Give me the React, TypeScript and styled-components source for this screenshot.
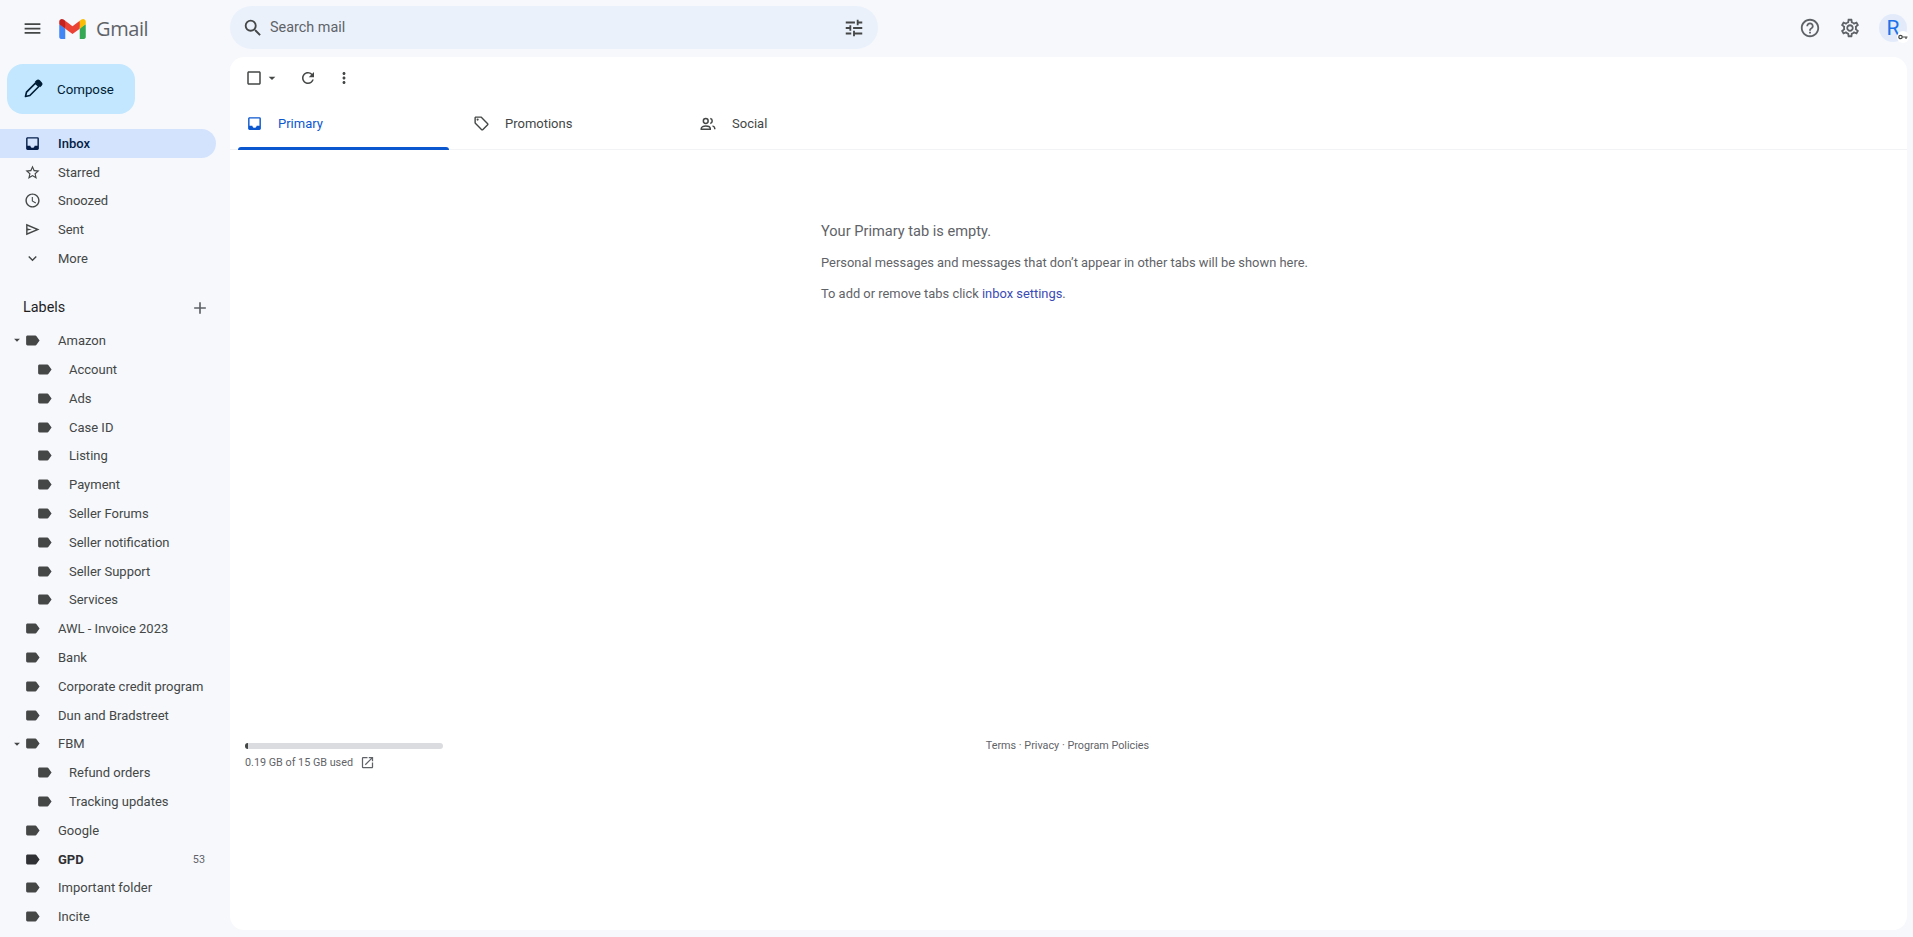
import React from "react";
import styled, { createGlobalStyle } from "styled-components";
import {
  MdMenu,
  MdSearch,
  MdTune,
  MdHelpOutline,
  MdOutlineSettings,
  MdInbox,
  MdStarBorder,
  MdAccessTime,
  MdExpandMore,
  MdAdd,
  MdLabel,
  MdArrowDropDown,
  MdCheckBoxOutlineBlank,
  MdRefresh,
  MdMoreVert,
  MdOutlineLocalOffer,
  MdOutlineOpenInNew,
} from "react-icons/md";

const GlobalStyle = createGlobalStyle`
  html, body {
    margin: 0;
    height: 100%;
    overflow: hidden;
    background: #f6f8fc;
  }
  body {
    font-family: Roboto, "Liberation Sans", sans-serif;
    color: #444746;
  }
`;

const Page = styled.div`
  height: 937px;
  display: grid;
  grid-template-columns: 230px 1fr;
  grid-template-rows: 57px 1fr;
  overflow: hidden;
`;

const Brand = styled.div`
  display: flex;
  align-items: center;
  padding-left: 22px;
  color: #444746;
`;

const LogoMark = styled.svg`
  width: 27px;
  height: 20px;
  margin-left: 16px;
`;

const Wordmark = styled.span`
  margin-left: 10px;
  font-family: "Open Sans", Roboto, sans-serif;
  font-size: 20px;
  letter-spacing: -0.4px;
  color: #5f6368;
`;

const TopBar = styled.header`
  display: flex;
  align-items: flex-start;
  justify-content: space-between;
  padding: 6px 6px 0 0;
`;

const SearchBox = styled.div`
  width: 648px;
  height: 43px;
  border-radius: 22px;
  background: #eaf1fb;
  display: flex;
  align-items: center;
  padding: 0 13px 0 12px;
  box-sizing: border-box;
  color: #444746;
`;

const SearchText = styled.span`
  flex: 1;
  margin-left: 6px;
  font-size: 14.4px;
  color: #5f6368;
`;

const TopActions = styled.div`
  display: flex;
  align-items: center;
  height: 43px;
  color: #5f6368;
  gap: 18px;
`;

const Avatar = styled.div`
  position: relative;
  width: 28px;
  height: 28px;
  border-radius: 50%;
  background: #e3ebfa;
  color: #1a73e8;
  font-size: 21px;
  display: flex;
  align-items: center;
  justify-content: center;
`;

const KeyBadge = styled.span`
  position: absolute;
  right: -2px;
  bottom: -1px;
  width: 12px;
  height: 12px;
  border-radius: 50%;
  background: #fff;
  color: #444746;
  display: flex;
  align-items: center;
  justify-content: center;
`;

const Sidebar = styled.aside`
  overflow: hidden;
  height: 880px;
`;

const ComposeButton = styled.div`
  width: 128px;
  height: 50px;
  margin: 7px 0 15px 7px;
  border-radius: 16px;
  background: #c2e7ff;
  color: #001d35;
  font-size: 13.3px;
  font-weight: 400;
  display: flex;
  align-items: center;
  gap: 14px;
  padding-left: 16px;
  box-sizing: border-box;
`;

const NavList = styled.nav`
  width: 216px;
`;

const NavRow = styled.div<{ $active?: boolean; $depth?: number; $bold?: boolean }>`
  position: relative;
  height: 28.8px;
  display: flex;
  align-items: center;
  padding-left: ${(p) => 23 + (p.$depth || 0) * 12}px;
  padding-right: 11px;
  border-radius: 0 15px 15px 0;
  font-size: 13px;
  font-weight: ${(p) => (p.$bold ? 700 : p.$active ? 500 : 400)};
  color: ${(p) => (p.$active ? "#041e49" : p.$bold ? "#303134" : "#444746")};
  background: ${(p) => (p.$active ? "#d3e3fd" : "transparent")};
`;

const NavIcon = styled.span<{ $depth?: number }>`
  width: 18px;
  height: 18px;
  flex: none;
  margin-right: ${(p) => (p.$depth ? 16 : 17)}px;
  display: flex;
  align-items: center;
  justify-content: center;
`;

const Caret = styled.span`
  position: absolute;
  left: 10px;
  top: 7px;
  color: #444746;
  display: flex;
`;

const Count = styled.span`
  margin-left: auto;
  font-size: 10.8px;
  font-weight: 400;
  color: #5f6368;
`;

const LabelsHead = styled.div`
  width: 216px;
  height: 28px;
  margin-top: 21px;
  margin-bottom: 4.4px;
  padding: 0 6px 0 23px;
  box-sizing: border-box;
  display: flex;
  align-items: center;
  justify-content: space-between;
  font-size: 14.4px;
  color: #1f1f1f;
`;

const AddLabel = styled.span`
  display: flex;
  color: #5f6368;
`;

const Panel = styled.main`
  margin: 0 6px 7px 0;
  height: 873px;
  background: #fff;
  border-radius: 14px;
  display: flex;
  flex-direction: column;
`;

const Toolbar = styled.div`
  height: 42px;
  display: flex;
  align-items: center;
  padding-left: 15px;
  color: #444746;
`;

const ToolButton = styled.span<{ $gap?: number }>`
  display: flex;
  align-items: center;
  margin-left: ${(p) => p.$gap || 0}px;
`;

const TabBar = styled.div`
  height: 50px;
  display: flex;
  padding-left: 8px;
  border-bottom: 1px solid #f1f3f4;
`;

const Tab = styled.div<{ $active?: boolean }>`
  position: relative;
  width: 211px;
  margin-right: 16px;
  display: flex;
  align-items: center;
  padding: 0 0 1px 7px;
  box-sizing: border-box;
  font-size: 13px;
  font-weight: 400;
  color: ${(p) => (p.$active ? "#0b57d0" : "#444746")};

  ${(p) =>
    p.$active &&
    `
    &::after {
      content: "";
      position: absolute;
      left: 0;
      right: 0;
      bottom: -1px;
      height: 3px;
      border-radius: 3px 3px 0 0;
      background: #0b57d0;
    }
  `}
`;

const TabIcon = styled.span`
  width: 18px;
  height: 18px;
  margin-right: 15px;
  display: flex;
  align-items: center;
  justify-content: center;
`;

const Empty = styled.section`
  height: 593px;
  padding: 72px 0 0 591px;
  box-sizing: border-box;
  color: #5f6368;
`;

const EmptyTitle = styled.div`
  font-size: 14.6px;
  line-height: 18px;
  margin-bottom: 15px;
`;

const EmptyLine = styled.div`
  font-size: 12.9px;
  line-height: 16px;
  margin-bottom: 15px;
`;

const InboxLink = styled.span`
  color: #3b4bb5;
`;

const Footer = styled.footer`
  display: grid;
  grid-template-columns: 1fr auto 1fr;
  padding: 0 15px;
  color: #5f6368;
  font-size: 10.8px;
`;

const StorageBar = styled.div`
  width: 198px;
  height: 6px;
  border-radius: 3px;
  background: #dadce0;
  overflow: hidden;
`;

const StorageFill = styled.div`
  height: 100%;
  background: #444746;
`;

const StorageText = styled.div`
  display: flex;
  align-items: center;
  gap: 7px;
  margin-top: 6px;
`;

const Terms = styled.div`
  line-height: 14px;
  margin-top: -4px;
  margin-left: -2px;
`;

function SendIcon() {
  return (
    <svg width="17" height="17" viewBox="0 0 24 24" fill="currentColor">
      <path d="M3 20V4l19 8-19 8zm2-3.1L16.8 12 5 7.1v3.4l6.1 1.5L5 13.5v3.4z" />
    </svg>
  );
}

function PenIcon() {
  return (
    <svg width="20" height="20" viewBox="0 0 24 24" fill="none" stroke="currentColor" strokeWidth="2">
      <path d="M3 21l1.2-5.2L15 5l4 4L8.2 19.8z" strokeLinejoin="round" />
      <path d="M15.5 3.5l1.2-1.2a2 2 0 012.8 0l2.2 2.2a2 2 0 010 2.8l-1.2 1.2z" fill="currentColor" />
    </svg>
  );
}

function PeopleIcon() {
  return (
    <svg width="18" height="18" viewBox="0 0 24 24" fill="none" stroke="currentColor" strokeWidth="2">
      <circle cx="9" cy="8" r="3.2" />
      <path d="M3 19v-1c0-2.2 3-3.5 6-3.5s6 1.3 6 3.5v1z" />
      <path d="M15 4.8c1.6.3 2.6 1.6 2.6 3.2s-1 2.9-2.6 3.2" />
      <path d="M18 14.5c1.8.5 3 1.6 3 3.3V19" />
    </svg>
  );
}

function KeyIcon() {
  return (
    <svg width="10" height="6" viewBox="0 0 20 12" fill="none" stroke="currentColor" strokeWidth="2.4">
      <circle cx="5" cy="6" r="3.4" />
      <path d="M8.5 6H19M16 6v4" />
    </svg>
  );
}

function GmailMark() {
  return (
    <LogoMark viewBox="0 0 256 193">
      <path fill="#4285F4" d="M58.182 192.05V93.14L27.507 65.077 0 49.504v125.091c0 9.658 7.825 17.455 17.455 17.455h40.727Z" />
      <path fill="#34A853" d="M197.818 192.05h40.727c9.659 0 17.455-7.826 17.455-17.455V49.505l-31.156 17.837-27.026 25.798v98.91Z" />
      <path fill="#EA4335" d="m58.182 93.14-4.174-38.647 4.174-36.989L128 69.868l69.818-52.364 4.669 34.992-4.669 40.644L128 145.504z" />
      <path fill="#FBBC04" d="M197.818 17.504V93.14L256 49.504V26.231c0-21.585-24.64-33.89-41.89-20.945l-16.292 12.218Z" />
      <path fill="#C5221F" d="M0 49.504l26.759 20.07L58.182 93.14V17.504L41.89 5.286C24.61-7.66 0 4.646 0 26.23v23.273Z" />
    </LogoMark>
  );
}

const mainNav = [
  { name: "Inbox", icon: <MdInbox size={17} />, active: true },
  { name: "Starred", icon: <MdStarBorder size={17} /> },
  { name: "Snoozed", icon: <MdAccessTime size={17} /> },
  { name: "Sent", icon: <SendIcon /> },
  { name: "More", icon: <MdExpandMore size={17} /> },
];

const labels = [
  { name: "Amazon", caret: true },
  { name: "Account", depth: 1 },
  { name: "Ads", depth: 1 },
  { name: "Case ID", depth: 1 },
  { name: "Listing", depth: 1 },
  { name: "Payment", depth: 1 },
  { name: "Seller Forums", depth: 1 },
  { name: "Seller notification", depth: 1 },
  { name: "Seller Support", depth: 1 },
  { name: "Services", depth: 1 },
  { name: "AWL - Invoice 2023" },
  { name: "Bank" },
  { name: "Corporate credit program" },
  { name: "Dun and Bradstreet" },
  { name: "FBM", caret: true },
  { name: "Refund orders", depth: 1 },
  { name: "Tracking updates", depth: 1 },
  { name: "Google" },
  { name: "GPD", bold: true, count: 53 },
  { name: "Important folder" },
  { name: "Incite" },
];

export default function App() {
  return (
    <>
      <GlobalStyle />
      <Page>
        <Brand>
          <MdMenu size={21} />
          <GmailMark />
          <Wordmark>Gmail</Wordmark>
        </Brand>

        <TopBar>
          <SearchBox>
            <MdSearch size={22} />
            <SearchText>Search mail</SearchText>
            <MdTune size={22} />
          </SearchBox>
          <TopActions>
            <MdHelpOutline size={22} />
            <MdOutlineSettings size={22} />
            <Avatar>
              R
              <KeyBadge>
                <KeyIcon />
              </KeyBadge>
            </Avatar>
          </TopActions>
        </TopBar>

        <Sidebar>
          <ComposeButton>
            <PenIcon />
            Compose
          </ComposeButton>
          <NavList>
            {mainNav.map((item) => (
              <NavRow key={item.name} $active={item.active}>
                <NavIcon>{item.icon}</NavIcon>
                {item.name}
              </NavRow>
            ))}
          </NavList>
          <LabelsHead>
            Labels
            <AddLabel>
              <MdAdd size={20} />
            </AddLabel>
          </LabelsHead>
          <NavList>
            {labels.map((label) => (
              <NavRow key={label.name} $depth={label.depth} $bold={label.bold}>
                {label.caret && (
                  <Caret>
                    <MdArrowDropDown size={14} />
                  </Caret>
                )}
                <NavIcon $depth={label.depth}>
                  <MdLabel size={17} />
                </NavIcon>
                {label.name}
                {label.count && <Count>{label.count}</Count>}
              </NavRow>
            ))}
          </NavList>
        </Sidebar>

        <Panel>
          <Toolbar>
            <ToolButton>
              <MdCheckBoxOutlineBlank size={18} />
            </ToolButton>
            <ToolButton $gap={1}>
              <MdArrowDropDown size={16} />
            </ToolButton>
            <ToolButton $gap={19}>
              <MdRefresh size={18} />
            </ToolButton>
            <ToolButton $gap={18}>
              <MdMoreVert size={18} />
            </ToolButton>
          </Toolbar>

          <TabBar>
            <Tab $active>
              <TabIcon>
                <MdInbox size={17} />
              </TabIcon>
              Primary
            </Tab>
            <Tab>
              <TabIcon>
                <MdOutlineLocalOffer size={17} />
              </TabIcon>
              Promotions
            </Tab>
            <Tab>
              <TabIcon>
                <PeopleIcon />
              </TabIcon>
              Social
            </Tab>
          </TabBar>

          <Empty>
            <EmptyTitle>Your Primary tab is empty.</EmptyTitle>
            <EmptyLine>Personal messages and messages that don’t appear in other tabs will be shown here.</EmptyLine>
            <EmptyLine>
              To add or remove tabs click <InboxLink>inbox settings</InboxLink>.
            </EmptyLine>
          </Empty>

          <Footer>
            <div>
              <StorageBar>
                <StorageFill style={{ width: `${(0.19 / 15) * 100}%` }} />
              </StorageBar>
              <StorageText>
                0.19 GB of 15 GB used
                <MdOutlineOpenInNew size={15} />
              </StorageText>
            </div>
            <Terms>Terms · Privacy · Program Policies</Terms>
            <div />
          </Footer>
        </Panel>
      </Page>
    </>
  );
}
